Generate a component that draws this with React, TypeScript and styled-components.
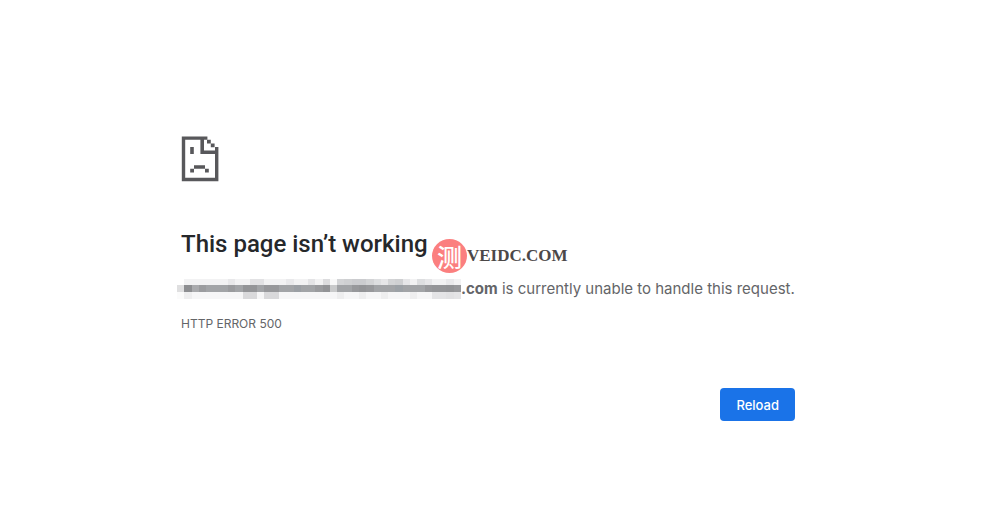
import React from "react";
import styled, { createGlobalStyle } from "styled-components";

const GlobalStyle = createGlobalStyle`
  body { margin: 0; background: #fff; color: #646568; font-family: Inter, "Liberation Sans", sans-serif; }
`;

const Page = styled.div`
  padding: 136px 24px 0 0;
`;

const Panel = styled.main`
  position: relative;
  max-width: 614px;
  margin: 0 auto;
`;

const SadPage = styled.svg`
  display: block;
  width: 38px;
  height: 46px;
`;

const Title = styled.h1`
  margin: 48px 0 0;
  font-family: Roboto, "Liberation Sans", sans-serif;
  font-size: 24px;
  line-height: 28px;
  font-weight: 500;
  color: #26282b;
`;

const Message = styled.p`
  display: flex;
  align-items: center;
  margin: 21px 0 0 -4px;
  font-size: 15px;
  line-height: 20px;
  white-space: pre;
`;

const Mosaic = styled.svg`
  flex: none;
  width: 284px;
  height: 20px;
`;

const ErrorCode = styled.p`
  margin: 17px 0 0;
  font-size: 12px;
  line-height: 16px;
`;

const Actions = styled.div`
  display: flex;
  justify-content: flex-end;
  margin-top: 56px;
`;

const ReloadButton = styled.button`
  border: 0;
  border-radius: 4px;
  padding: 0 16px;
  height: 33px;
  background: #1a73e8;
  color: #fff;
  font: 500 13px Inter, "Liberation Sans", sans-serif;
`;

const Watermark = styled.div`
  position: absolute;
  left: 251px;
  top: 103px;
  display: flex;
  align-items: center;
  color: #4c4848;
`;

const Seal = styled.span`
  display: grid;
  place-items: center;
  width: 35px;
  height: 34px;
  border-radius: 50%;
  background: #fb7f7f;
  color: #fff;
  font: 500 25px/33px "Noto Sans CJK SC", sans-serif;
`;

const Brand = styled.span`
  font: 700 17px/34px "Liberation Serif", serif;
`;

type Shades = Record<number, string>;

const COLUMNS = 39;
const STEP = 284 / COLUMNS;

const rows: { y: number; height: number; base: string; shades: Shades }[] = [
  {
    y: 0,
    height: 6,
    base: "#f2f2f3",
    shades: {
      0: "#fff", 7: "#e8e8ea", 10: "#e2e2e4", 11: "#e2e2e4", 15: "#e9e9eb", 18: "#e4e4e6", 20: "#dcdcde", 21: "#f9f9f9",
      22: "#d3d4d6", 23: "#cfd0d2", 24: "#cbcccf", 25: "#cbcccf", 26: "#d3d4d6", 27: "#dddee0", 28: "#e6e6e8",
      29: "#d3d4d6", 30: "#cfd0d2", 31: "#e6e6e8", 33: "#dddee0", 34: "#e6e6e8", 37: "#e9e9eb",
    },
  },
  {
    y: 6,
    height: 7,
    base: "#a2a4a7",
    shades: {
      0: "#dfdfe0", 1: "#8d8e91", 2: "#a9aaad", 3: "#9b9c9f", 7: "#9a9b9e", 9: "#939497", 10: "#949598", 12: "#97989b",
      13: "#97989b", 16: "#9b9fa4", 19: "#9a9b9e", 20: "#929396", 21: "#c9cacb", 24: "#97989b", 25: "#939497",
      26: "#97989b", 30: "#9ca1a6", 34: "#97989b", 35: "#949598", 36: "#949598", 37: "#929396", 38: "#97989b",
    },
  },
  {
    y: 13,
    height: 7,
    base: "#f6f6f7",
    shades: {
      0: "#fbfbfb", 1: "#eeeeef", 9: "#d9d9db", 10: "#d9d9db", 12: "#d9d9db", 13: "#d9d9db", 22: "#eeeeef",
      25: "#eeeeef", 28: "#eeeeef", 32: "#eeeeef", 35: "#e4e4e6", 36: "#e4e4e6", 37: "#e1e1e3", 38: "#e4e4e6",
    },
  },
];

function RedactedHost() {
  return (
    <Mosaic viewBox="0 0 284 20" aria-hidden="true">
      {rows.map((row) =>
        Array.from({ length: COLUMNS }, (_, i) => {
          const left = Math.round(i * STEP);
          return (
            <rect
              key={`${row.y}-${i}`}
              x={left}
              y={row.y}
              width={Math.round((i + 1) * STEP) - left}
              height={row.height}
              fill={row.shades[i] ?? row.base}
            />
          );
        })
      )}
    </Mosaic>
  );
}

export default function App() {
  return (
    <>
      <GlobalStyle />
      <Page>
        <Panel>
          <SadPage viewBox="0 0 38 46" fill="#58585b" aria-hidden="true">
            <path d="M.8 .4H26.4V3.8H23V14.6H34V11H37.4V45.2H.8ZM4.2 3.8V41.8H34V18H19.4V3.8Z" fillRule="evenodd" />
            <path d="M26 3.8H29.8V7.6H33.6V11.2H29.8V7.6H26Z" />
            <path d="M9.2 11H12.8V18H9.2ZM13 29.2H24V32.8H13ZM9.2 32.8H13V36.4H9.2ZM24 32.8H27.8V36.4H24Z" />
          </SadPage>
          <Title>This page isn’t working</Title>
          <Message>
            <RedactedHost />
            <strong>.com</strong> is currently unable to handle this request.
          </Message>
          <ErrorCode>HTTP ERROR 500</ErrorCode>
          <Actions>
            <ReloadButton type="button">Reload</ReloadButton>
          </Actions>
          <Watermark>
            <Seal>测</Seal>
            <Brand>VEIDC.COM</Brand>
          </Watermark>
        </Panel>
      </Page>
    </>
  );
}
